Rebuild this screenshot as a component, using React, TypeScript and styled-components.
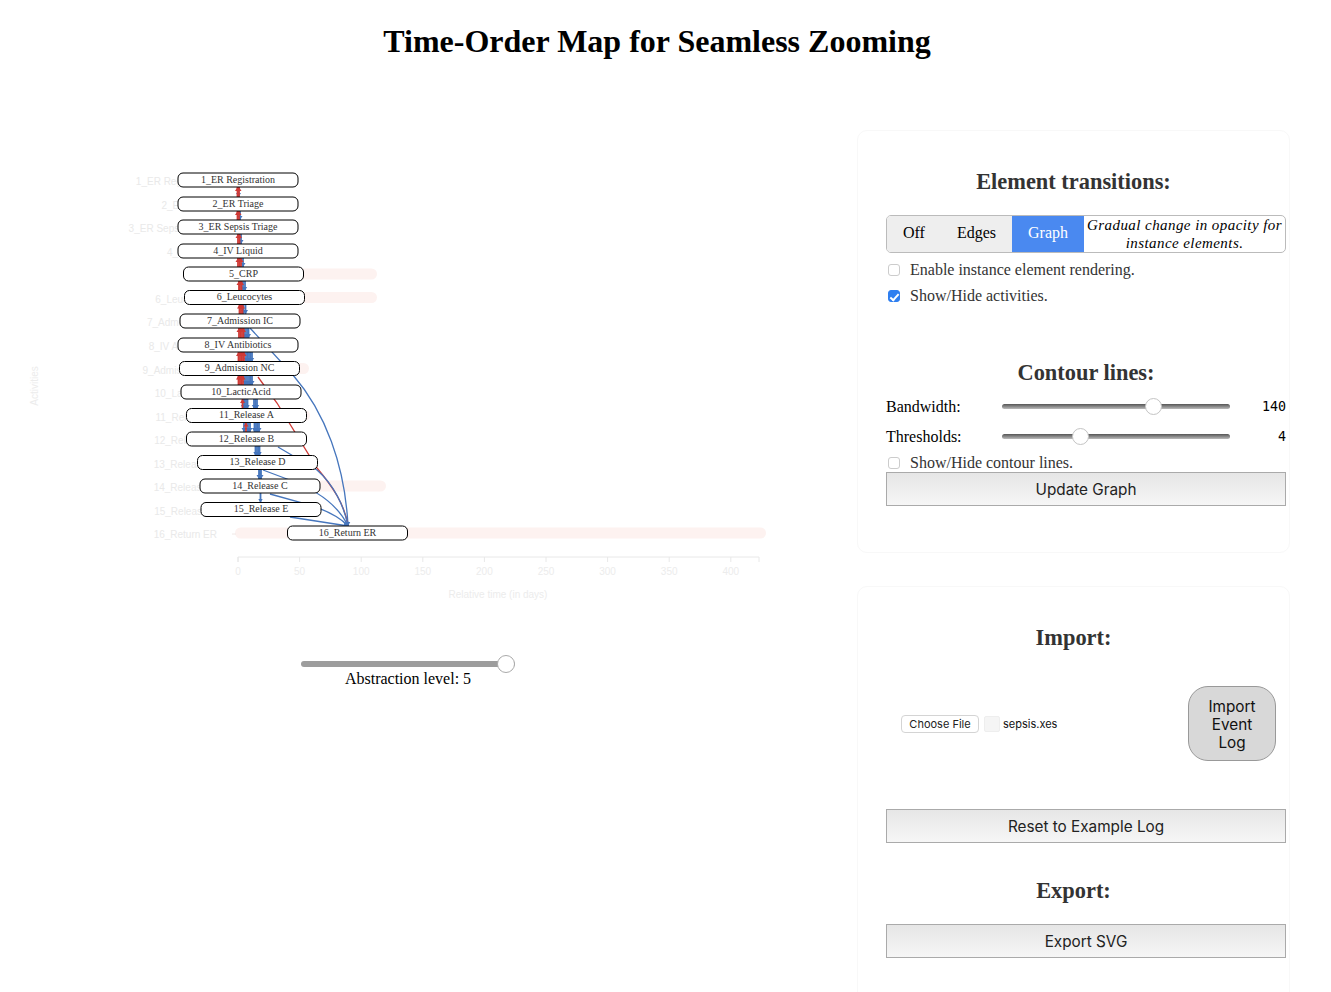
import React from 'react';
import styled, { createGlobalStyle } from 'styled-components';

const SERIF = '"Liberation Serif", "Times New Roman", serif';
const SANS = 'Inter, "Liberation Sans", sans-serif';
const BLUE = '#4676bd';
const RED = '#cf3a36';

const ROWS = [
  { name: '1_ER Registration', x: 178, y: 180 },
  { name: '2_ER Triage', x: 178, y: 204 },
  { name: '3_ER Sepsis Triage', x: 178, y: 227 },
  { name: '4_IV Liquid', x: 178, y: 251 },
  { name: '5_CRP', x: 183.5, y: 274, end: 377 },
  { name: '6_Leucocytes', x: 184.5, y: 297.5, end: 377 },
  { name: '7_Admission IC', x: 180, y: 321 },
  { name: '8_IV Antibiotics', x: 178, y: 345 },
  { name: '9_Admission NC', x: 179.5, y: 368.5, end: 309 },
  { name: '10_LacticAcid', x: 181, y: 392 },
  { name: '11_Release A', x: 186.5, y: 415.5, end: 310 },
  { name: '12_Release B', x: 186.5, y: 439 },
  { name: '13_Release D', x: 197.5, y: 462.5 },
  { name: '14_Release C', x: 200, y: 486, end: 386 },
  { name: '15_Release E', x: 201, y: 509.5 },
  { name: '16_Return ER', x: 287.5, y: 533, start: 235, end: 766 },
];

// x positions of the edges running through the gap below each row
const GAPS = [
  { red: [237.5, 239], blue: [238.5] },
  { red: [237.5, 239], blue: [240] },
  { red: [238, 239.5], blue: [241] },
  { red: [238, 239.5, 241], blue: [243] },
  { red: [239, 240, 241.5], blue: [243, 245] },
  { red: [239.5, 241, 242.5], blue: [243.5, 245.5] },
  { red: [239, 240.5, 242, 243.5], blue: [245, 247, 248.5] },
  { red: [238.5, 240, 241.5, 243, 244], blue: [246, 247.5, 249, 250.5, 252] },
  { red: [238.5, 240, 241.5, 243], blue: [245, 247, 249, 250.5, 252] },
  { red: [242.5], blue: [243, 244.5, 246, 247.5, 254, 255.5, 257] },
  { red: [246], blue: [244, 248, 250, 254.5, 256, 257.5, 259] },
  { red: [], blue: [255.5, 257, 258.5, 259.5] },
  { red: [], blue: [259, 260, 261] },
  { red: [], blue: [260.5] },
];

const LONG_EDGES = [
  { d: 'M250 328L293 375C325 412 345 465 348 526', color: BLUE },
  { d: 'M258 377L277 403L317 468C333 487 345 505 348 526', color: RED },
  { d: 'M278 447L317 470C333 484 344 505 348 526', color: BLUE },
  { d: 'M263 470L287 479C315 489 338 505 348 526', color: BLUE },
  { d: 'M270 494L310 505C328 511 340 517 348 526', color: BLUE },
  { d: 'M290 517L348 526', color: BLUE },
];

const TICKS = [0, 50, 100, 150, 200, 250, 300, 350, 400];
const tickX = (value: number) => 238 + value * 1.232;

const GlobalStyle = createGlobalStyle`
  html, body {
    height: 100%;
    margin: 0;
    overflow: hidden;
    background: #fff;
    font-family: ${SERIF};
  }
`;

const Page = styled.div`
  width: 1331px;
`;

const Title = styled.h1`
  width: 1314px;
  margin: 0;
  padding: 23px 0 52px;
  box-sizing: content-box;
  height: 37px;
  font: bold 32px/37px ${SERIF};
  color: #000;
  text-align: center;
  white-space: nowrap;
`;

const Main = styled.main`
  display: grid;
  grid-template-columns: 857px 433px;
  margin-top: 18px;
`;

const Chart = styled.svg`
  display: block;
  width: 857px;
  height: 490px;
`;

const RowLabel = styled.text`
  font: 10px "Liberation Sans", sans-serif;
  fill: #e9e9e9;
  text-anchor: end;
`;

const AxisText = styled.text`
  font: 10px "Liberation Sans", sans-serif;
  fill: #ececec;
  text-anchor: middle;
`;

const NodeBox = styled.rect`
  fill: #fff;
  stroke: #000;
  stroke-width: 1;
`;

const NodeText = styled.text`
  font: 10px ${SERIF};
  fill: #333;
  text-anchor: middle;
  dominant-baseline: central;
`;

const Abstraction = styled.div`
  width: 214px;
  margin: 35px 0 0 301px;
  text-align: center;
  font-size: 16px;
  line-height: 18px;
  color: #000;
`;

const LevelSlider = styled.input`
  appearance: none;
  display: block;
  width: 214px;
  height: 18px;
  margin: 0 0 -3px;
  background: transparent;

  &::-webkit-slider-runnable-track {
    height: 6px;
    border-radius: 3px;
    background: #9d9d9d;
  }
  &::-webkit-slider-thumb {
    appearance: none;
    width: 18px;
    height: 18px;
    margin-top: -6px;
    border: 1px solid #aaa;
    border-radius: 50%;
    background: #fff;
    box-sizing: border-box;
  }
`;

const Sidebar = styled.aside`
  display: flex;
  flex-direction: column;
  gap: 33px;
`;

const Card = styled.section<{ $height?: number }>`
  box-sizing: border-box;
  ${(p) => (p.$height ? `height: ${p.$height}px;` : '')}
  padding: 38px 0 46px;
  border: 1px solid #f8f8f8;
  border-radius: 10px;
`;

const Heading = styled.h2<{ $gap?: number }>`
  margin: ${(p) => p.$gap ?? 0}px 0 0;
  font: bold 22.4px/25px ${SERIF};
  color: #333;
  text-align: center;
`;

const Body = styled.div`
  width: 400px;
  margin-left: 28px;
`;

const Tabs = styled.div`
  box-sizing: border-box;
  display: flex;
  height: 38px;
  margin-top: 21px;
  border: 1px solid #bbb;
  border-radius: 5px;
  overflow: hidden;
`;

const Tab = styled.button<{ $active?: boolean }>`
  padding: 0 16px 2px;
  border: 0;
  background: ${(p) => (p.$active ? '#4a89f0' : '#eee')};
  color: ${(p) => (p.$active ? '#fff' : '#000')};
  font: 16px ${SERIF};
`;

const TabNote = styled.span`
  flex: 1;
  align-self: center;
  text-align: center;
  font: italic 15px/18px ${SERIF};
  letter-spacing: 0.43px;
  color: #000;
`;

const CheckRow = styled.label<{ $height?: number; $gap?: number }>`
  display: flex;
  align-items: center;
  gap: 10px;
  height: ${(p) => p.$height ?? 20}px;
  margin-top: ${(p) => p.$gap ?? 6}px;
  padding-left: 2px;
  font-size: 16px;
  color: #333;
`;

const Check = styled.input`
  appearance: none;
  position: relative;
  flex: none;
  width: 12px;
  height: 12px;
  margin: 0;
  border: 1px solid #ccc;
  border-radius: 3px;
  background: #fff;

  &:checked {
    border-color: #2f7ff0;
    background: #2f7ff0;
  }
  &:checked::after {
    content: '';
    position: absolute;
    left: 3px;
    top: 0.5px;
    width: 3px;
    height: 7px;
    border: solid #fff;
    border-width: 0 2px 2px 0;
    transform: rotate(42deg);
  }
`;

const RangeRow = styled.div<{ $gap?: number }>`
  display: grid;
  grid-template-columns: 116px 228px 1fr;
  align-items: center;
  height: 30px;
  margin-top: ${(p) => p.$gap ?? 0}px;
  font-size: 16px;
  color: #000;
`;

const RangeLabel = styled.span`
  margin-top: 2px;
`;

const RangeInput = styled.input`
  appearance: none;
  width: 228px;
  height: 18px;
  margin: 0;
  background: transparent;

  &::-webkit-slider-runnable-track {
    height: 5px;
    border-radius: 3px;
    background: linear-gradient(#555, #bbb);
  }
  &::-webkit-slider-thumb {
    appearance: none;
    box-sizing: border-box;
    width: 17px;
    height: 17px;
    margin-top: -6px;
    border: 1px solid #c4c4c4;
    border-radius: 50%;
    background: #fff;
  }
`;

const RangeValue = styled.output`
  font: 13.33px "DejaVu Sans Mono", monospace;
  color: #000;
  text-align: right;
`;

const WideButton = styled.button<{ $gap?: number }>`
  display: block;
  box-sizing: border-box;
  width: 400px;
  height: 34px;
  margin-top: ${(p) => p.$gap ?? 0}px;
  border: 1px solid #aaa;
  background: linear-gradient(#e6e6e6, #f6f6f6);
  font: 15.3px ${SANS};
  color: #222;
`;

const ImportRow = styled.div`
  display: flex;
  align-items: center;
  height: 75px;
  margin-top: 36px;
  padding: 0 10px 0 15px;
`;

const ChooseFile = styled.button`
  box-sizing: border-box;
  width: 78px;
  height: 18px;
  padding: 0;
  border: 1px solid #d4d4d4;
  border-radius: 4px;
  background: #fff;
  font: 11px ${SANS};
  color: #222;
`;

const FileSwatch = styled.span`
  box-sizing: border-box;
  width: 16px;
  height: 16px;
  margin: 0 3px 0 5px;
  border: 1px solid #eee;
  border-radius: 2px;
  background: #f5f5f5;
`;

const FileName = styled.span`
  flex: 1;
  font: 11px ${SANS};
  color: #111;
`;

const ImportButton = styled.button`
  box-sizing: border-box;
  width: 88px;
  height: 75px;
  padding: 2px 0 0;
  border: 1px solid #999;
  border-radius: 20px;
  background: #d8d8d8;
  font: 15.3px/18px ${SANS};
  color: #111;
`;

const App = () => (
  <Page>
    <GlobalStyle />
    <Title>Time-Order Map for Seamless Zooming</Title>
    <Main>
      <div>
        <Chart viewBox="0 130 857 490">
          <defs>
            <marker id="arrow-blue" markerUnits="userSpaceOnUse" markerWidth="5" markerHeight="6" refX="4" refY="3" orient="auto">
              <path d="M0 0.5L4 3L0 5.5Z" fill={BLUE} />
            </marker>
            <marker id="arrow-red" markerUnits="userSpaceOnUse" markerWidth="5" markerHeight="6" refX="4" refY="3" orient="auto">
              <path d="M0 0.5L4 3L0 5.5Z" fill={RED} />
            </marker>
          </defs>

          {ROWS.map((row) => (
            <React.Fragment key={row.name}>
              {row.end && (
                <rect
                  x={row.start ?? 238}
                  y={row.y - 5.5}
                  width={row.end - (row.start ?? 238)}
                  height={11}
                  rx={5.5}
                  fill="#fdf2f0"
                />
              )}
              <RowLabel x={217} y={row.y + 5}>
                {row.name}
              </RowLabel>
            </React.Fragment>
          ))}
          <path d="M232 534H236" stroke="#f0e8e6" />

          {GAPS.map((gap, i) => {
            const top = ROWS[i].y + 7;
            const bottom = ROWS[i + 1].y - 7;
            return (
              <g key={ROWS[i].name} fill="none" strokeWidth={1.8}>
                {gap.blue.map((x) => (
                  <path key={x} d={`M${x} ${top}V${bottom}`} stroke={BLUE} markerEnd="url(#arrow-blue)" />
                ))}
                {gap.red.map((x) => (
                  <path key={x} d={`M${x} ${bottom}V${top}`} stroke={RED} markerEnd="url(#arrow-red)" />
                ))}
              </g>
            );
          })}
          {LONG_EDGES.map((edge) => (
            <path
              key={edge.d}
              d={edge.d}
              fill="none"
              stroke={edge.color}
              strokeWidth={1.3}
              markerEnd={edge.color === BLUE ? 'url(#arrow-blue)' : undefined}
            />
          ))}

          {ROWS.map((row) => (
            <g key={row.name}>
              <NodeBox x={row.x} y={row.y - 7} width={120} height={14} rx={5} />
              <NodeText x={row.x + 60} y={row.y - 1}>
                {row.name}
              </NodeText>
            </g>
          ))}

          <path d="M238 562V557H759V562" fill="none" stroke="#e8e8e8" />
          {TICKS.map((tick) => (
            <g key={tick}>
              <path d={`M${tickX(tick)} 557V562`} stroke="#e8e8e8" />
              <AxisText x={tickX(tick)} y={575}>
                {tick}
              </AxisText>
            </g>
          ))}
          <AxisText x={498} y={598}>
            Relative time (in days)
          </AxisText>
          <AxisText transform="translate(38 386) rotate(-90)">Activities</AxisText>
        </Chart>
        <Abstraction>
          <LevelSlider type="range" min={0} max={5} defaultValue={5} />
          Abstraction level: 5
        </Abstraction>
      </div>

      <Sidebar>
        <Card>
          <Heading>Element transitions:</Heading>
          <Body>
            <Tabs>
              <Tab>Off</Tab>
              <Tab>Edges</Tab>
              <Tab $active>Graph</Tab>
              <TabNote>
                Gradual change in opacity for
                <br />
                instance elements.
              </TabNote>
            </Tabs>
            <CheckRow $gap={7}>
              <Check type="checkbox" />
              Enable instance element rendering.
            </CheckRow>
            <CheckRow>
              <Check type="checkbox" defaultChecked />
              Show/Hide activities.
            </CheckRow>
            <Heading $gap={54}>Contour lines:</Heading>
            <RangeRow $gap={6}>
              <RangeLabel>Bandwidth:</RangeLabel>
              <RangeInput type="range" min={0} max={206} defaultValue={140} />
              <RangeValue>140</RangeValue>
            </RangeRow>
            <RangeRow>
              <RangeLabel>Thresholds:</RangeLabel>
              <RangeInput type="range" min={1} max={10} defaultValue={4} />
              <RangeValue>4</RangeValue>
            </RangeRow>
            <CheckRow $height={18} $gap={3}>
              <Check type="checkbox" />
              Show/Hide contour lines.
            </CheckRow>
            <WideButton>Update Graph</WideButton>
          </Body>
        </Card>

        <Card $height={440}>
          <Heading>Import:</Heading>
          <Body>
            <ImportRow>
              <ChooseFile>Choose File</ChooseFile>
              <FileSwatch />
              <FileName>sepsis.xes</FileName>
              <ImportButton>
                Import
                <br />
                Event
                <br />
                Log
              </ImportButton>
            </ImportRow>
            <WideButton $gap={48}>Reset to Example Log</WideButton>
          </Body>
          <Heading $gap={35}>Export:</Heading>
          <Body>
            <WideButton $gap={21}>Export SVG</WideButton>
          </Body>
        </Card>
      </Sidebar>
    </Main>
  </Page>
);

export default App;
